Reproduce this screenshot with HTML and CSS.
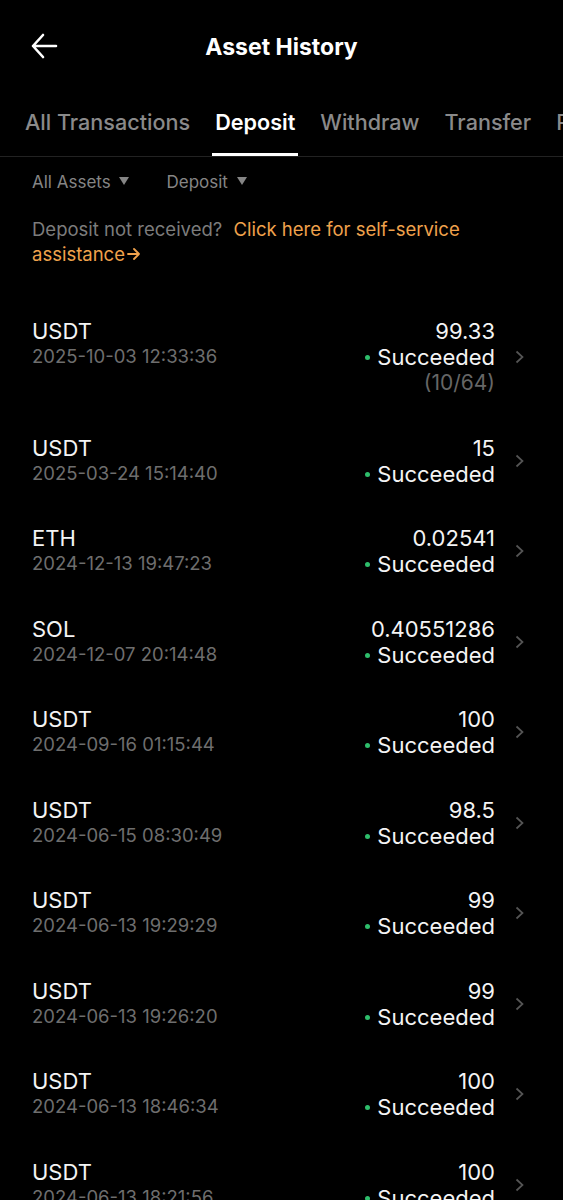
FILE: index.html
```html
<!DOCTYPE html>
<html>

<head>
    <meta charset="UTF-8">
    <title>Asset History</title>
    <link rel="stylesheet" href="styles.css">
</head>

<body>
    <header class="topbar">
        <svg class="back" width="28" height="26" viewBox="0 0 28 26">
            <path d="M26 13H3M13 2L3 13l10 11" fill="none" stroke="#fff" stroke-width="2.6" stroke-linecap="round" stroke-linejoin="round" />
        </svg>
        <h1>Asset History</h1>
    </header>

    <nav class="tabs">
        <span class="tab">All Transactions</span>
        <span class="tab active">Deposit</span>
        <span class="tab">Withdraw</span>
        <span class="tab">Transfer</span>
        <span class="tab">P2P</span>
    </nav>

    <div class="filters">
        <span class="filter">All Assets <i class="caret"></i></span>
        <span class="filter">Deposit <i class="caret"></i></span>
    </div>

    <p class="notice">Deposit not received? <a>Click here for self-service assistance<svg width="14" height="14" viewBox="0 0 14 14"><path d="M1 7h11M7 2l5 5-5 5" fill="none" stroke="#f0a24c" stroke-width="1.8" stroke-linecap="round" stroke-linejoin="round" /></svg></a></p>

    <ul class="list">
        <li class="row">
            <div class="left"><div class="coin">USDT</div><div class="time">2025-10-03 12:33:36</div></div>
            <div class="right"><div class="amount">99.33</div><div class="status"><i class="dot"></i>Succeeded</div><div class="conf">(10/64)</div></div>
            <svg class="chev" width="9" height="14" viewBox="0 0 9 14"><path d="M1.5 1.5l6 5.5-6 5.5" fill="none" stroke="#555" stroke-width="1.7" /></svg>
        </li>
        <li class="row">
            <div class="left"><div class="coin">USDT</div><div class="time">2025-03-24 15:14:40</div></div>
            <div class="right"><div class="amount">15</div><div class="status"><i class="dot"></i>Succeeded</div></div>
            <svg class="chev" width="9" height="14" viewBox="0 0 9 14"><path d="M1.5 1.5l6 5.5-6 5.5" fill="none" stroke="#555" stroke-width="1.7" /></svg>
        </li>
        <li class="row">
            <div class="left"><div class="coin">ETH</div><div class="time">2024-12-13 19:47:23</div></div>
            <div class="right"><div class="amount">0.02541</div><div class="status"><i class="dot"></i>Succeeded</div></div>
            <svg class="chev" width="9" height="14" viewBox="0 0 9 14"><path d="M1.5 1.5l6 5.5-6 5.5" fill="none" stroke="#555" stroke-width="1.7" /></svg>
        </li>
        <li class="row">
            <div class="left"><div class="coin">SOL</div><div class="time">2024-12-07 20:14:48</div></div>
            <div class="right"><div class="amount">0.40551286</div><div class="status"><i class="dot"></i>Succeeded</div></div>
            <svg class="chev" width="9" height="14" viewBox="0 0 9 14"><path d="M1.5 1.5l6 5.5-6 5.5" fill="none" stroke="#555" stroke-width="1.7" /></svg>
        </li>
        <li class="row">
            <div class="left"><div class="coin">USDT</div><div class="time">2024-09-16 01:15:44</div></div>
            <div class="right"><div class="amount">100</div><div class="status"><i class="dot"></i>Succeeded</div></div>
            <svg class="chev" width="9" height="14" viewBox="0 0 9 14"><path d="M1.5 1.5l6 5.5-6 5.5" fill="none" stroke="#555" stroke-width="1.7" /></svg>
        </li>
        <li class="row">
            <div class="left"><div class="coin">USDT</div><div class="time">2024-06-15 08:30:49</div></div>
            <div class="right"><div class="amount">98.5</div><div class="status"><i class="dot"></i>Succeeded</div></div>
            <svg class="chev" width="9" height="14" viewBox="0 0 9 14"><path d="M1.5 1.5l6 5.5-6 5.5" fill="none" stroke="#555" stroke-width="1.7" /></svg>
        </li>
        <li class="row">
            <div class="left"><div class="coin">USDT</div><div class="time">2024-06-13 19:29:29</div></div>
            <div class="right"><div class="amount">99</div><div class="status"><i class="dot"></i>Succeeded</div></div>
            <svg class="chev" width="9" height="14" viewBox="0 0 9 14"><path d="M1.5 1.5l6 5.5-6 5.5" fill="none" stroke="#555" stroke-width="1.7" /></svg>
        </li>
        <li class="row">
            <div class="left"><div class="coin">USDT</div><div class="time">2024-06-13 19:26:20</div></div>
            <div class="right"><div class="amount">99</div><div class="status"><i class="dot"></i>Succeeded</div></div>
            <svg class="chev" width="9" height="14" viewBox="0 0 9 14"><path d="M1.5 1.5l6 5.5-6 5.5" fill="none" stroke="#555" stroke-width="1.7" /></svg>
        </li>
        <li class="row">
            <div class="left"><div class="coin">USDT</div><div class="time">2024-06-13 18:46:34</div></div>
            <div class="right"><div class="amount">100</div><div class="status"><i class="dot"></i>Succeeded</div></div>
            <svg class="chev" width="9" height="14" viewBox="0 0 9 14"><path d="M1.5 1.5l6 5.5-6 5.5" fill="none" stroke="#555" stroke-width="1.7" /></svg>
        </li>
        <li class="row">
            <div class="left"><div class="coin">USDT</div><div class="time">2024-06-13 18:21:56</div></div>
            <div class="right"><div class="amount">100</div><div class="status"><i class="dot"></i>Succeeded</div></div>
            <svg class="chev" width="9" height="14" viewBox="0 0 9 14"><path d="M1.5 1.5l6 5.5-6 5.5" fill="none" stroke="#555" stroke-width="1.7" /></svg>
        </li>
    </ul>
</body>

</html>
```

FILE: styles.css
```css
body {
    margin: 0;
    background: #000;
    color: #f2f2f2;
    font-family: Inter, "Noto Sans", sans-serif;
    overflow: hidden;
}

.topbar {
    position: relative;
    height: 94px;
    display: flex;
    align-items: center;
    justify-content: center;
}

.back {
    position: absolute;
    left: 30px;
    top: 33px;
}

.topbar h1 {
    margin: 0;
    font-size: 23px;
    font-weight: 700;
    color: #fff;
}

.tabs {
    display: flex;
    gap: 25px;
    padding-left: 25px;
    height: 62px;
    border-bottom: 1px solid #222;
    white-space: nowrap;
    overflow: hidden;
}

.tab {
    padding-top: 15px;
    line-height: 26px;
    font-size: 21.6px;
    font-weight: 500;
    color: #8a8a8a;
    border-bottom: 3px solid transparent;
    box-sizing: border-box;
}

.tab.active {
    color: #fff;
    font-weight: 600;
    border-bottom-color: #fff;
    padding: 15px 3px 0;
    margin: 0 -3px;
}

.filters {
    display: flex;
    gap: 37px;
    padding: 13px 0 0 32px;
    line-height: 24px;
    font-size: 17px;
    color: #858585;
}

.caret {
    display: inline-block;
    margin-left: 4px;
    vertical-align: 3px;
    border-left: 5px solid transparent;
    border-right: 5px solid transparent;
    border-top: 8px solid #858585;
}

.notice {
    margin: 23px 60px 0 32px;
    font-size: 18.5px;
    line-height: 25px;
    color: #7c7c7c;
}

.notice a {
    color: #f0a24c;
    margin-left: 6px;
}

.notice svg {
    margin-left: 2px;
    vertical-align: 0;
}

.list {
    list-style: none;
    margin: 32px 0 0;
    padding: 0;
}

.row {
    display: flex;
    align-items: center;
    padding: 19px 39px 19.5px 32px;
}

.left {
    flex: 1;
    align-self: flex-start;
}

.coin,
.amount,
.status {
    font-size: 22px;
    line-height: 26px;
    color: #f4f4f4;
}

.time {
    font-size: 18.5px;
    line-height: 25px;
    color: #6e6e6e;
}

.right {
    text-align: right;
}

.dot {
    display: inline-block;
    width: 5px;
    height: 5px;
    border-radius: 50%;
    background: #2ebd6b;
    margin-right: 7px;
    vertical-align: 5px;
}

.conf {
    font-size: 21px;
    line-height: 26px;
    color: #666;
}

.chev {
    margin-left: 20px;
}
```
